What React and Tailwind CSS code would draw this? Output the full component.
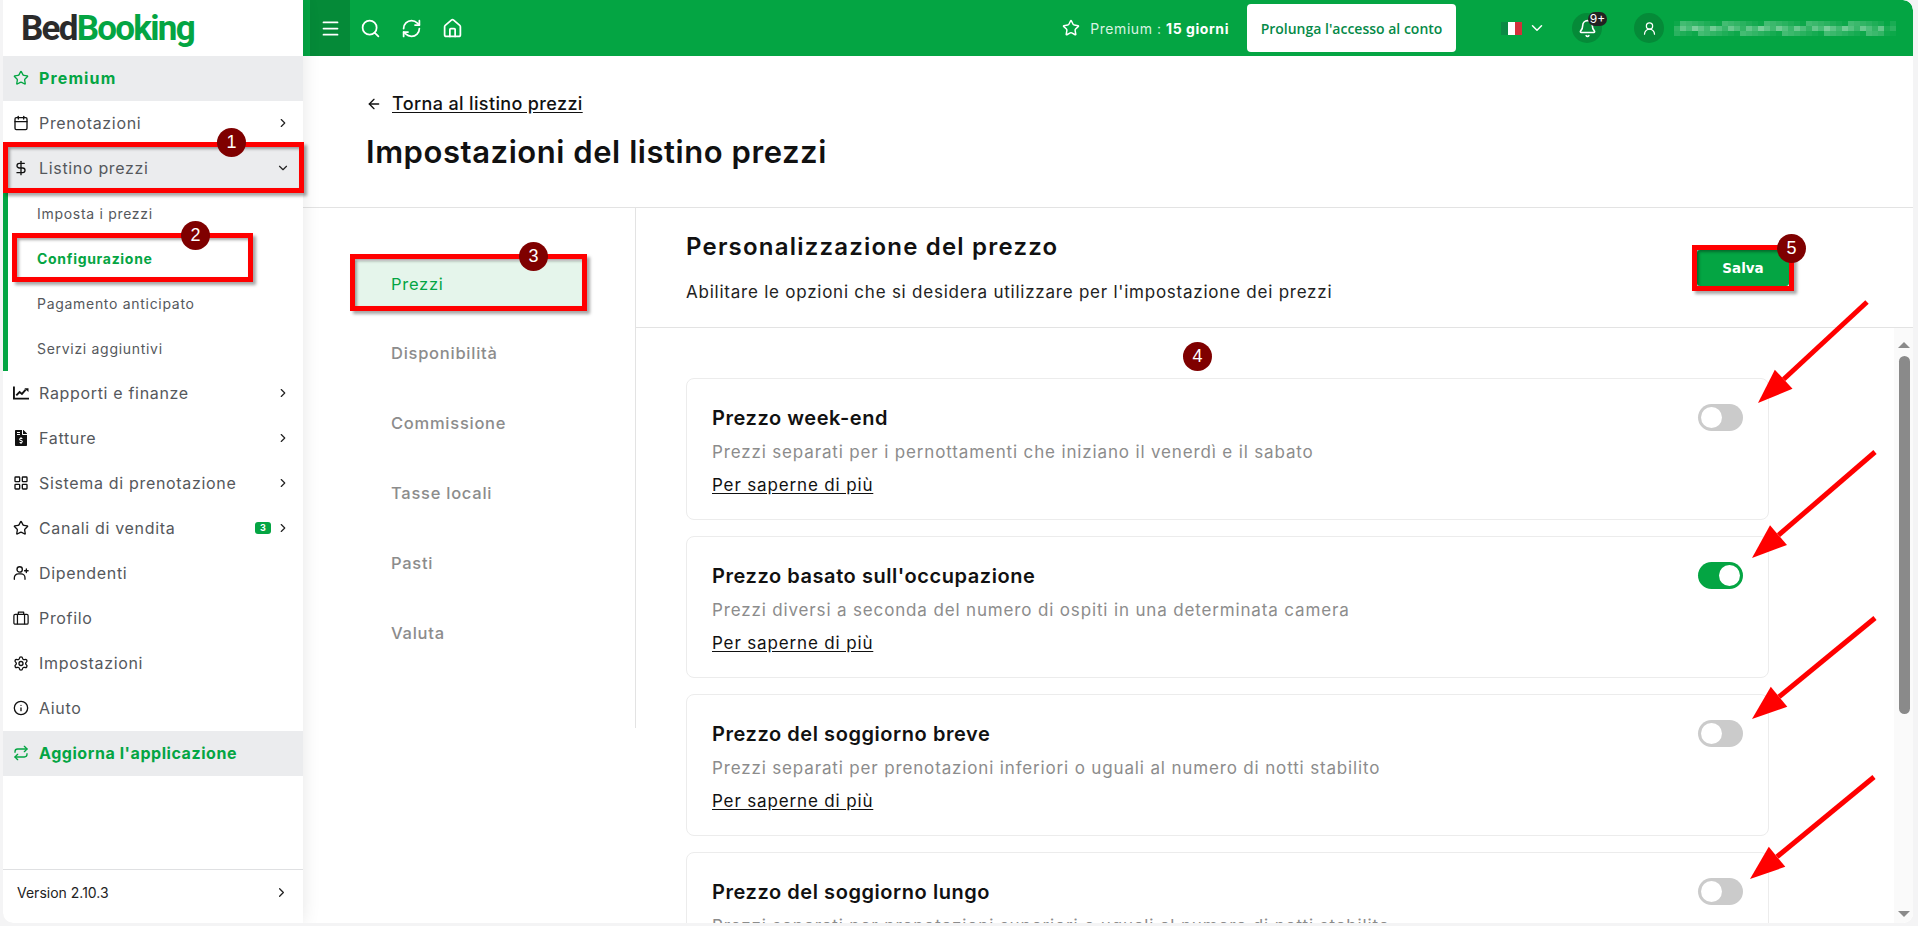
import { ArrowLeft, Bell, Calendar, ChevronDown, ChevronRight, DollarSign, House, Info, LayoutGrid, Menu, RefreshCw, Repeat, Search, Settings, Star, UserRound } from 'lucide-react';
import { FaFileInvoiceDollar } from 'react-icons/fa';

function ChartIcon() {
  return (
    <svg width="17" height="16" viewBox="0 0 17 16" fill="none" stroke="#111" strokeWidth="2">
      <path d="M1 1v13h16" />
      <path d="M3.5 10.5 7 7l2.5 2L13.5 4.5" />
      <path d="M12 3h4.5v4z" fill="#111" stroke="none" />
    </svg>
  );
}

function UserAdd({ size = 18 }) {
  return (
    <svg width={size} height={size} viewBox="0 0 18 18" fill="none" stroke="#111" strokeWidth="1.5" strokeLinecap="round">
      <circle cx="7.5" cy="5" r="3" />
      <path d="M1.5 16v-1.5a4.5 4.5 0 0 1 4.5-4.5h3a4.5 4.5 0 0 1 4.5 4.5V16" />
      <path d="M15 4.5v4M13 6.5h4" />
    </svg>
  );
}

function Briefcase({ size = 18 }) {
  return (
    <svg width={size} height={size} viewBox="0 0 18 18" fill="none" stroke="#111" strokeWidth="1.4" strokeLinejoin="round">
      <rect x="1" y="5" width="16" height="11" rx="1.5" />
      <path d="M5 5v11M13 5v11M6 5V2.5h6V5" />
    </svg>
  );
}

const menuTop = [
  { label: 'Prenotazioni', icon: <Calendar size={16} color="#111" />, arrow: true },
];

const menuBottom = [
  { label: 'Rapporti e finanze', icon: <ChartIcon />, arrow: true },
  { label: 'Fatture', icon: <FaFileInvoiceDollar size={16} color="#111" />, arrow: true },
  { label: 'Sistema di prenotazione', icon: <LayoutGrid size={16} color="#111" />, arrow: true },
  { label: 'Canali di vendita', icon: <Star size={16} color="#111" />, arrow: true, badge: '3' },
  { label: 'Dipendenti', icon: <UserAdd /> },
  { label: 'Profilo', icon: <Briefcase /> },
  { label: 'Impostazioni', icon: <Settings size={17} color="#111" /> },
  { label: 'Aiuto', icon: <Info size={16} color="#111" /> },
];

const subItems = ['Imposta i prezzi', 'Configurazione', 'Pagamento anticipato', 'Servizi aggiuntivi'];
const tabs = ['Prezzi', 'Disponibilità', 'Commissione', 'Tasse locali', 'Pasti', 'Valuta'];

const cards = [
  { title: 'Prezzo week-end', text: 'Prezzi separati per i pernottamenti che iniziano il venerdì e il sabato' },
  { title: "Prezzo basato sull'occupazione", text: 'Prezzi diversi a seconda del numero di ospiti in una determinata camera', on: true },
  { title: 'Prezzo del soggiorno breve', text: 'Prezzi separati per prenotazioni inferiori o uguali al numero di notti stabilito' },
  { title: 'Prezzo del soggiorno lungo', text: 'Prezzi separati per prenotazioni superiori o uguali al numero di notti stabilito' },
];

function MenuRow({ item }) {
  return (
    <div className="h-[45px] flex items-center pl-[10px] pr-[13px] pb-[1px] text-[16px] text-[#55585c]">
      <span className="w-[16px] flex justify-center shrink-0">{item.icon}</span>
      <span className="ml-[10px] flex-1 tracking-[0.042em]">{item.label}</span>
      {item.badge && (
        <span className="mr-[5px] w-[16px] h-[12px] rounded-[3px] bg-[#04a543] text-white text-[9px] font-bold flex items-center justify-center">{item.badge}</span>
      )}
      {item.arrow && <ChevronRight size={14} color="#222" />}
    </div>
  );
}

function Sidebar() {
  return (
    <aside className="relative z-10 w-[300px] shrink-0 flex flex-col bg-white rounded-bl-[10px] shadow-[0_0_18px_rgba(0,0,0,0.1)]">
      <div className="h-[56px] pl-[18px] flex items-center text-[35px] font-bold tracking-[-0.05em] leading-none" style={{ fontFamily: 'Roboto, sans-serif' }}>
        <span className="text-[#2b2b2b]">Bed</span>
        <span className="text-[#04a543]">Booking</span>
      </div>
      <div className="h-[45px] bg-[#ebecee] flex items-center pl-[10px] pb-[1px] text-[16px] font-bold text-[#04a543] tracking-[0.07em]">
        <Star size={16} />
        <span className="ml-[10px]">Premium</span>
      </div>
      {menuTop.map((m) => <MenuRow key={m.label} item={m} />)}
      <div className="h-[45px] bg-[#ebecee] flex items-center pl-[10px] pr-[13px] pb-[1px] text-[16px] text-[#55585c]">
        <span className="w-[16px] flex justify-center"><DollarSign size={16} color="#111" /></span>
        <span className="ml-[10px] flex-1 tracking-[0.042em]">Listino prezzi</span>
        <ChevronDown size={14} color="#222" />
      </div>
      <div className="border-l-[5px] border-[#04a543]">
        {subItems.map((s) => (
          <div key={s} className={`h-[45px] flex items-center pl-[29px] pb-[1px] text-[14px] tracking-[0.05em] ${s === 'Configurazione' ? 'font-bold text-[#04a543]' : 'text-[#55585c]'}`}>{s}</div>
        ))}
      </div>
      {menuBottom.map((m) => <MenuRow key={m.label} item={m} />)}
      <div className="h-[45px] bg-[#ebecee] flex items-center pl-[10px] pb-[1px] text-[16px] font-bold text-[#04a543] tracking-[0.035em]">
        <Repeat size={16} />
        <span className="ml-[10px]">Aggiorna l'applicazione</span>
      </div>
      <div className="mt-auto h-[54px] border-t border-[#dfe0e2] flex items-center pl-[14px] pr-[14px] pb-[8px] text-[14px] text-[#222]">
        <span className="flex-1">Version 2.10.3</span>
        <ChevronRight size={15} color="#222" />
      </div>
    </aside>
  );
}

// pixelated e-mail in the top bar
function BlurredMail() {
  const blocks = [];
  for (let i = 0; i < 37; i++) {
    for (let j = 0; j < 3; j++) {
      const o = j === 1 ? 0.18 + ((i * 7) % 11) / 35 : 0.04 + ((i * 13 + j * 5) % 7) / 28;
      blocks.push(<rect key={`${i}-${j}`} x={i * 6} y={j * 5} width="6" height="5" fill="#ffffff" opacity={i > 34 ? o / 3 : o} />);
    }
  }
  return <svg width="222" height="15" viewBox="0 0 222 15" className="ml-[10px]">{blocks}</svg>;
}

function Header() {
  return (
    <header className="h-[56px] shrink-0 bg-[#04a543] rounded-tr-[10px] flex items-center text-white pl-[7px] pr-[17px]">
      <div className="w-[40px] h-[56px] bg-[#058a38] flex items-center justify-center"><Menu size={21} /></div>
      <div className="ml-[10px] flex items-center gap-[20px]">
        <Search size={21} />
        <RefreshCw size={21} />
        <House size={21} />
      </div>
      <div className="ml-auto flex items-center">
        <Star size={18} />
        <span className="ml-[10px] text-[14px] text-[#d9f3e2] tracking-[0.04em]">Premium : <b className="text-white">15 giorni</b></span>
        <div className="ml-[18px] w-[209px] h-[48px] bg-white rounded-[4px] flex items-center justify-center text-[14px] font-semibold text-[#058a48]" style={{ fontFamily: '"Open Sans", sans-serif' }}>Prolunga l'accesso al conto</div>
        <span className="ml-[45px] w-[21px] h-[13px] flex">
          <span className="flex-1 bg-[#0b8a45]" />
          <span className="flex-1 bg-white" />
          <span className="flex-1 bg-[#d2313b]" />
        </span>
        <ChevronDown size={18} className="ml-[6px]" />
        <div className="relative ml-[26px] w-[30px] h-[30px] rounded-full bg-[#058a38] flex items-center justify-center">
          <Bell size={19} />
          <span className="absolute -top-[1px] -right-[5px] w-[19px] h-[14px] rounded-full bg-[#222] text-[12px] leading-none flex items-center justify-center">9+</span>
        </div>
        <div className="ml-[32px] w-[30px] h-[30px] rounded-full bg-[#058a38] flex items-center justify-center"><UserRound size={15} /></div>
        <BlurredMail />
      </div>
    </header>
  );
}

function Toggle({ on }) {
  return (
    <span className={`w-[45px] h-[27px] rounded-full flex items-center px-[3px] ${on ? 'bg-[#04a543] justify-end' : 'bg-[#cbcbcb] justify-start'}`}>
      <span className="w-[21px] h-[21px] rounded-full bg-white" />
    </span>
  );
}

function Card({ card }) {
  return (
    <div className="h-[142px] shrink-0 border border-[#ececec] rounded-[8px] pl-[25px] pr-[25px] pt-[25px]">
      <div className="flex justify-between">
        <div className="pt-[1px] text-[20px] leading-[27px] font-semibold text-[#111] tracking-[0.028em]">{card.title}</div>
        <Toggle on={card.on} />
      </div>
      <div className="mt-[8px] text-[17px] leading-[24px] text-[#8c8c8c] tracking-[0.05em]">{card.text}</div>
      <div className="mt-[9px] text-[17px] leading-[24px] text-[#111] underline underline-offset-2 tracking-[0.05em]">Per saperne di più</div>
    </div>
  );
}

function SettingsBody() {
  return (
    <div className="flex-1 min-h-0 flex">
      <nav className="w-[333px] h-[520px] shrink-0 pt-[53px] pl-[52px] pr-[53px] flex flex-col gap-[23.8px] border-r border-[#e3e3e3]">
        {tabs.map((t, i) => (
          <div key={t} className={`h-[46px] flex items-center pl-[36px] text-[16.5px] tracking-[0.045em] ${i === 0 ? 'bg-[#e5f5eb] text-[#04a543]' : 'text-[#8c8c8c] font-medium'}`}>{t}</div>
        ))}
      </nav>
      <section className="flex-1 min-w-0 flex flex-col self-stretch">
        <div className="h-[120px] shrink-0 border-b border-[#e3e3e3] pl-[50px] pr-[124px] flex items-start justify-between">
          <div className="pt-[23px]">
            <h2 className="text-[24px] leading-[32px] font-semibold text-[#111] tracking-[0.05em]">Personalizzazione del prezzo</h2>
            <p className="mt-[18px] text-[17px] leading-[22px] text-[#222] tracking-[0.045em]">Abilitare le opzioni che si desidera utilizzare per l'impostazione dei prezzi</p>
          </div>
          <button className="mt-[42px] w-[92px] h-[36px] bg-[#04a543] rounded-[3px] text-white text-[13.5px] font-bold" style={{ fontFamily: '"DejaVu Sans", sans-serif' }}>Salva</button>
        </div>
        <div className="flex-1 min-h-0 flex overflow-hidden">
          <div className="flex-1 min-w-0 flex flex-col gap-[16px] pl-[50px] pr-[125px] pt-[50px]">
            {cards.map((c) => <Card key={c.title} card={c} />)}
          </div>
          <div className="w-[19px] shrink-0 bg-[#fafafa] flex flex-col items-center pt-[14px] pb-[6px] pl-[1px]">
            <span className="w-0 h-0 border-x-[6px] border-x-transparent border-b-[6px] border-b-[#8a8a8a]" />
            <span className="mt-[8px] w-[11px] h-[358px] rounded-full bg-[#8a8a8a]" />
            <span className="mt-auto w-0 h-0 border-x-[6px] border-x-transparent border-t-[6px] border-t-[#8a8a8a]" />
          </div>
        </div>
      </section>
    </div>
  );
}

function RedBox({ className }) {
  return <div className={`absolute border-[5px] border-[#ff0000] shadow-[3px_3px_3px_rgba(0,0,0,0.35),inset_2px_2px_3px_rgba(0,0,0,0.35)] ${className}`} />;
}

function Marker({ n, className }) {
  return <div className={`absolute w-[29px] h-[29px] rounded-full bg-[#7f0000] text-white text-[18px] flex items-center justify-center ${className}`} style={{ fontFamily: '"Liberation Sans", sans-serif' }}>{n}</div>;
}

const arrows = [
  [1867, 302, 1758, 403],
  [1875, 452, 1752, 558],
  [1875, 618, 1752, 719],
  [1874, 777, 1750, 879],
];

function Arrows() {
  return (
    <svg className="absolute inset-0" width="1918" height="926" fill="#ff0000">
      {arrows.map(([x1, y1, x2, y2]) => {
        const len = Math.hypot(x2 - x1, y2 - y1);
        const ux = (x2 - x1) / len;
        const uy = (y2 - y1) / len;
        const bx = x2 - ux * 35;
        const by = y2 - uy * 35;
        const p1 = `${bx - uy * 13},${by + ux * 13}`;
        const p2 = `${bx + uy * 13},${by - ux * 13}`;
        return (
          <g key={y1}>
            <line x1={x1} y1={y1} x2={bx} y2={by} stroke="#ff0000" strokeWidth="5" />
            <polygon points={`${x2},${y2} ${p1} ${p2}`} />
          </g>
        );
      })}
    </svg>
  );
}

export default function App() {
  return (
    <div className="relative w-[1918px] h-[926px] overflow-hidden bg-[#f4f4f5] text-[#111]" style={{ fontFamily: 'Inter, sans-serif' }}>
      <div className="ml-[3px] mr-[5px] mb-[3px] h-[923px] flex rounded-b-[10px] rounded-tr-[10px] overflow-hidden bg-white">
        <Sidebar />
        <main className="flex-1 min-w-0 flex flex-col bg-white">
          <Header />
          <div className="h-[152px] shrink-0 border-b border-[#e3e3e3] pl-[63px] pt-[36px]">
            <div className="flex items-center text-[18px] font-medium leading-[24px]">
              <ArrowLeft size={16} />
              <span className="ml-[10px] underline underline-offset-2 tracking-[0.02em]">Torna al listino prezzi</span>
            </div>
            <h1 className="mt-[15px] text-[31px] leading-[42px] font-semibold tracking-[0.018em]">Impostazioni del listino prezzi</h1>
          </div>
          <SettingsBody />
        </main>
      </div>

      {/* annotations drawn on top of the screenshot */}
      <div className="absolute inset-0 z-20 pointer-events-none">
        <RedBox className="left-[3px] top-[142px] w-[301px] h-[51px]" />
        <RedBox className="left-[12px] top-[233px] w-[241px] h-[49px]" />
        <RedBox className="left-[350px] top-[254px] w-[237px] h-[57px]" />
        <RedBox className="left-[1692px] top-[245px] w-[102px] h-[46px]" />
        <Marker n="1" className="left-[217px] top-[128px]" />
        <Marker n="2" className="left-[181px] top-[221px]" />
        <Marker n="3" className="left-[519px] top-[242px]" />
        <Marker n="4" className="left-[1183px] top-[342px]" />
        <Marker n="5" className="left-[1777px] top-[234px]" />
        <Arrows />
      </div>
    </div>
  );
}
